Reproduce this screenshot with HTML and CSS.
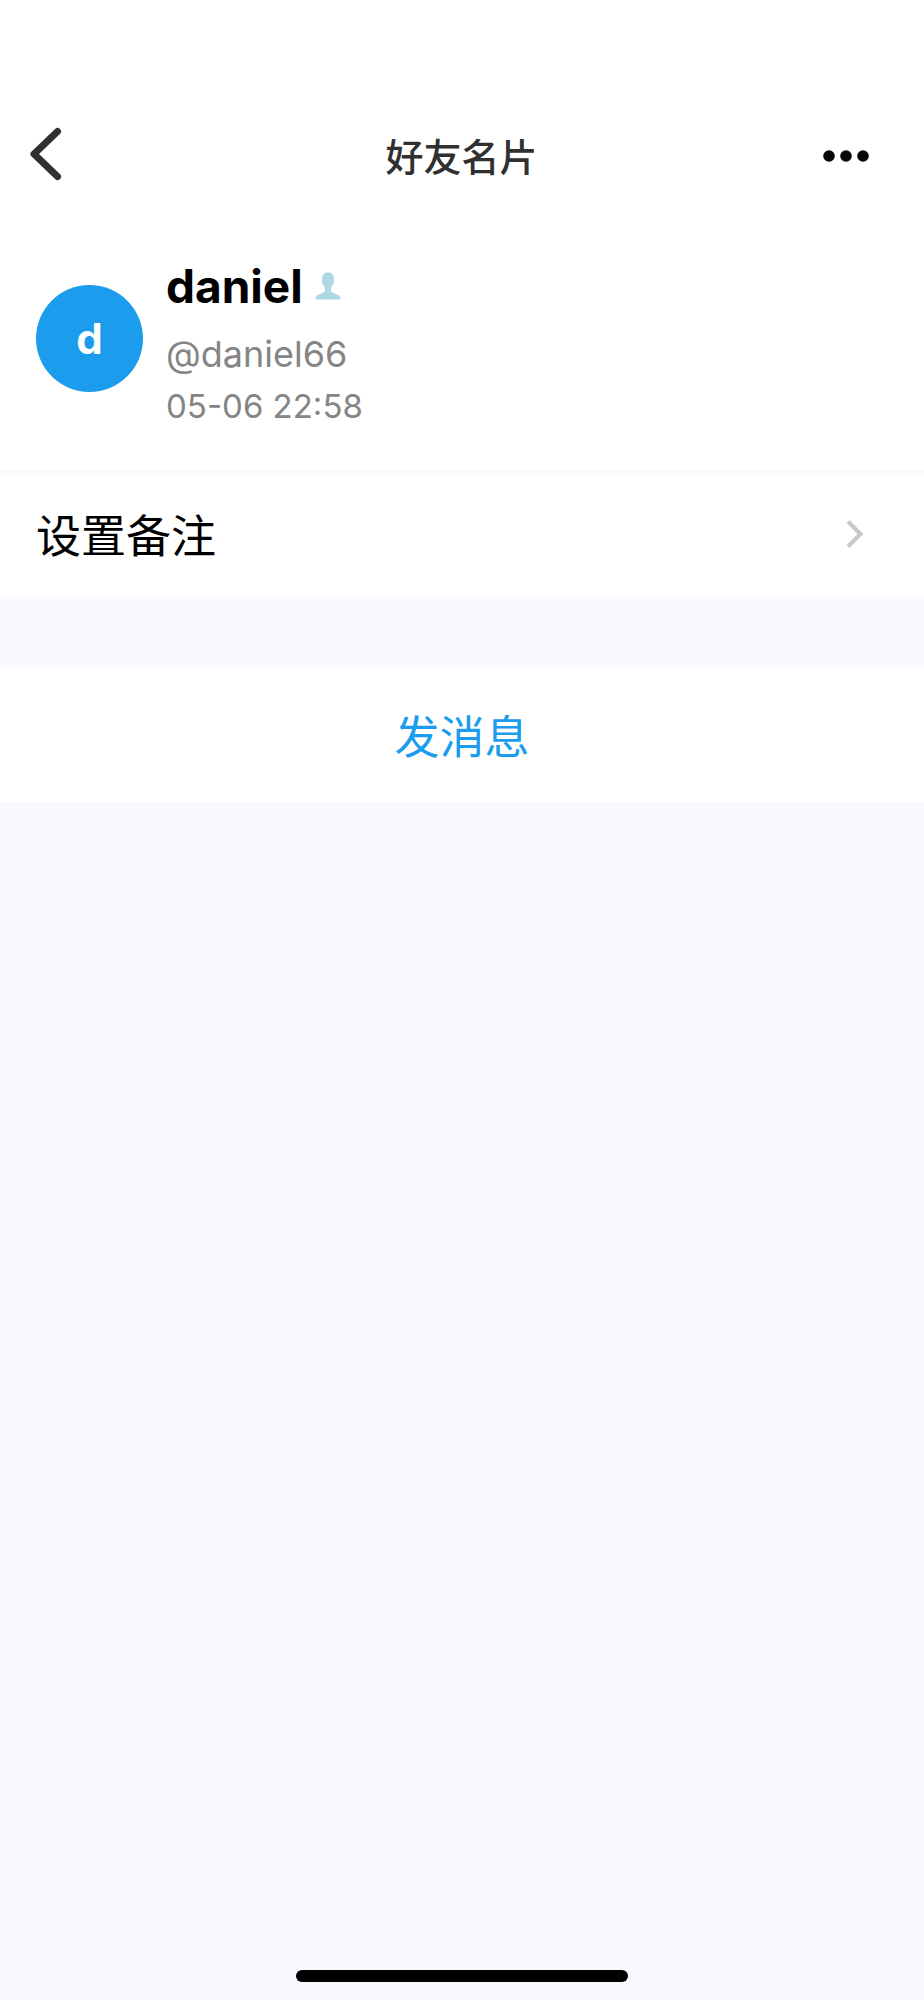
FILE: index.html
```html
<!DOCTYPE html>
<html lang="zh-CN">
<head>
<meta charset="utf-8">
<meta name="viewport" content="width=device-width, initial-scale=1">
<title>好友名片</title>
<link rel="stylesheet" href="styles.css">
</head>
<body>
<div class="screen">
  <header class="nav">
    <button class="nav-button" type="button" aria-label="返回">
      <svg width="32" height="54" viewBox="0 0 32 54" fill="none" stroke="#303030" stroke-width="7" stroke-linecap="round" stroke-linejoin="round"><path d="M27.5 4.500 4 27 27.500 49.500"/></svg>
    </button>
    <h1 class="nav-title">好友名片</h1>
    <button class="nav-button nav-more" type="button" aria-label="更多">
      <svg width="46" height="12" viewBox="0 0 46 12" fill="#070707"><circle cx="6" cy="6" r="5.8"/><circle cx="23" cy="6" r="5.8"/><circle cx="40" cy="6" r="5.8"/></svg>
    </button>
  </header>
  <main class="content">
    <section class="profile">
      <div class="avatar">d</div>
      <div class="info">
        <div class="name-line">
          <h2 class="name">daniel</h2>
          <svg class="person" width="26" height="28" viewBox="0 0 26 28" fill="#add8e6"><path d="M13 0.5c-3.6 0-5.8 2.3-5.8 6 0 .8.1 1.4.2 2-.9.2-.6 2.800.5 3.200.4 1.800 1.200 3.100 2.100 4v3.100c-.5 1.600-2.500 2.400-4.800 3.200C2.300 23.100.5 24 .2 27.500h25.600c-.3-3.500-2.100-4.400-5-5.500-2.300-.8-4.300-1.600-4.800-3.200v-3.100c.9-.9 1.700-2.200 2.100-4 1.100-.4 1.400-3 .5-3.200.1-.6.2-1.200.2-2 0-3.700-2.200-6-5.800-6z"/></svg>
        </div>
        <p class="handle">@daniel66</p>
        <p class="time">05-06 22:58</p>
      </div>
    </section>
    <button class="row" type="button">
      <span>设置备注</span>
      <svg width="18" height="28" viewBox="0 0 18 28" fill="none" stroke="#c8c8c8" stroke-width="4"><path d="M2 1.500 14.500 14 2 26.500"/></svg>
    </button>
    <button class="message" type="button">发消息</button>
  </main>
  <div class="home-bar"></div>
</div>
</body>
</html>
```
FILE: styles.css
```css
* {
  box-sizing: border-box;
}

body,
h1,
h2,
p {
  margin: 0;
}

body {
  background: #f8faff;
  color: #000;
  font-family: Inter, "Noto Sans CJK SC", sans-serif;
}

button {
  border: 0;
  padding: 0;
  background: #fff;
  color: inherit;
  font: inherit;
  cursor: pointer;
}

svg {
  display: block;
}

.screen {
  display: flex;
  flex-direction: column;
  min-height: 100vh;
}

.nav {
  display: grid;
  grid-template-columns: 1fr auto 1fr;
  align-items: center;
  padding: 115px 55px 25px 30px;
  background: #fff;
}

.nav-button {
  justify-self: start;
  padding: 12px 0 14px;
}

.nav-more {
  justify-self: end;
  padding: 14px 0 12px;
}

.nav-title {
  padding-left: 24px;
  color: #303030;
  font-family: "Noto Sans CJK SC", sans-serif;
  font-size: 38px;
  font-weight: 500;
  line-height: 56px;
}

.content {
  flex: 1;
}

.profile {
  display: flex;
  align-items: center;
  gap: 23px;
  padding: 28px 36px 42px;
  border-bottom: 3px solid #f9f9fa;
  background: #fff;
}

.avatar {
  flex: none;
  width: 107px;
  height: 107px;
  border-radius: 50%;
  background: #1b9cec;
  color: #fff;
  font-size: 42px;
  font-weight: 700;
  line-height: 107px;
  text-align: center;
}

.name-line {
  display: flex;
  align-items: center;
  gap: 12px;
}

.name {
  font-size: 46px;
  font-weight: 700;
  line-height: 76px;
}

.handle {
  color: #858585;
  font-size: 36px;
  line-height: 60px;
}

.time {
  color: #858585;
  font-size: 33px;
  line-height: 44px;
}

.row {
  display: flex;
  align-items: center;
  justify-content: space-between;
  width: 100%;
  padding: 27px 60px 29px 36px;
  font-family: "Noto Sans CJK SC", sans-serif;
  font-size: 45px;
  line-height: 67px;
}

.message {
  display: block;
  width: 100%;
  margin-top: 72px;
  padding: 33px 0;
  color: #1b9cec;
  font-family: "Noto Sans CJK SC", sans-serif;
  font-size: 45px;
  line-height: 68px;
}

.home-bar {
  align-self: center;
  width: 36%;
  height: 12px;
  margin-bottom: 18px;
  border-radius: 6px;
  background: #000;
}
```
